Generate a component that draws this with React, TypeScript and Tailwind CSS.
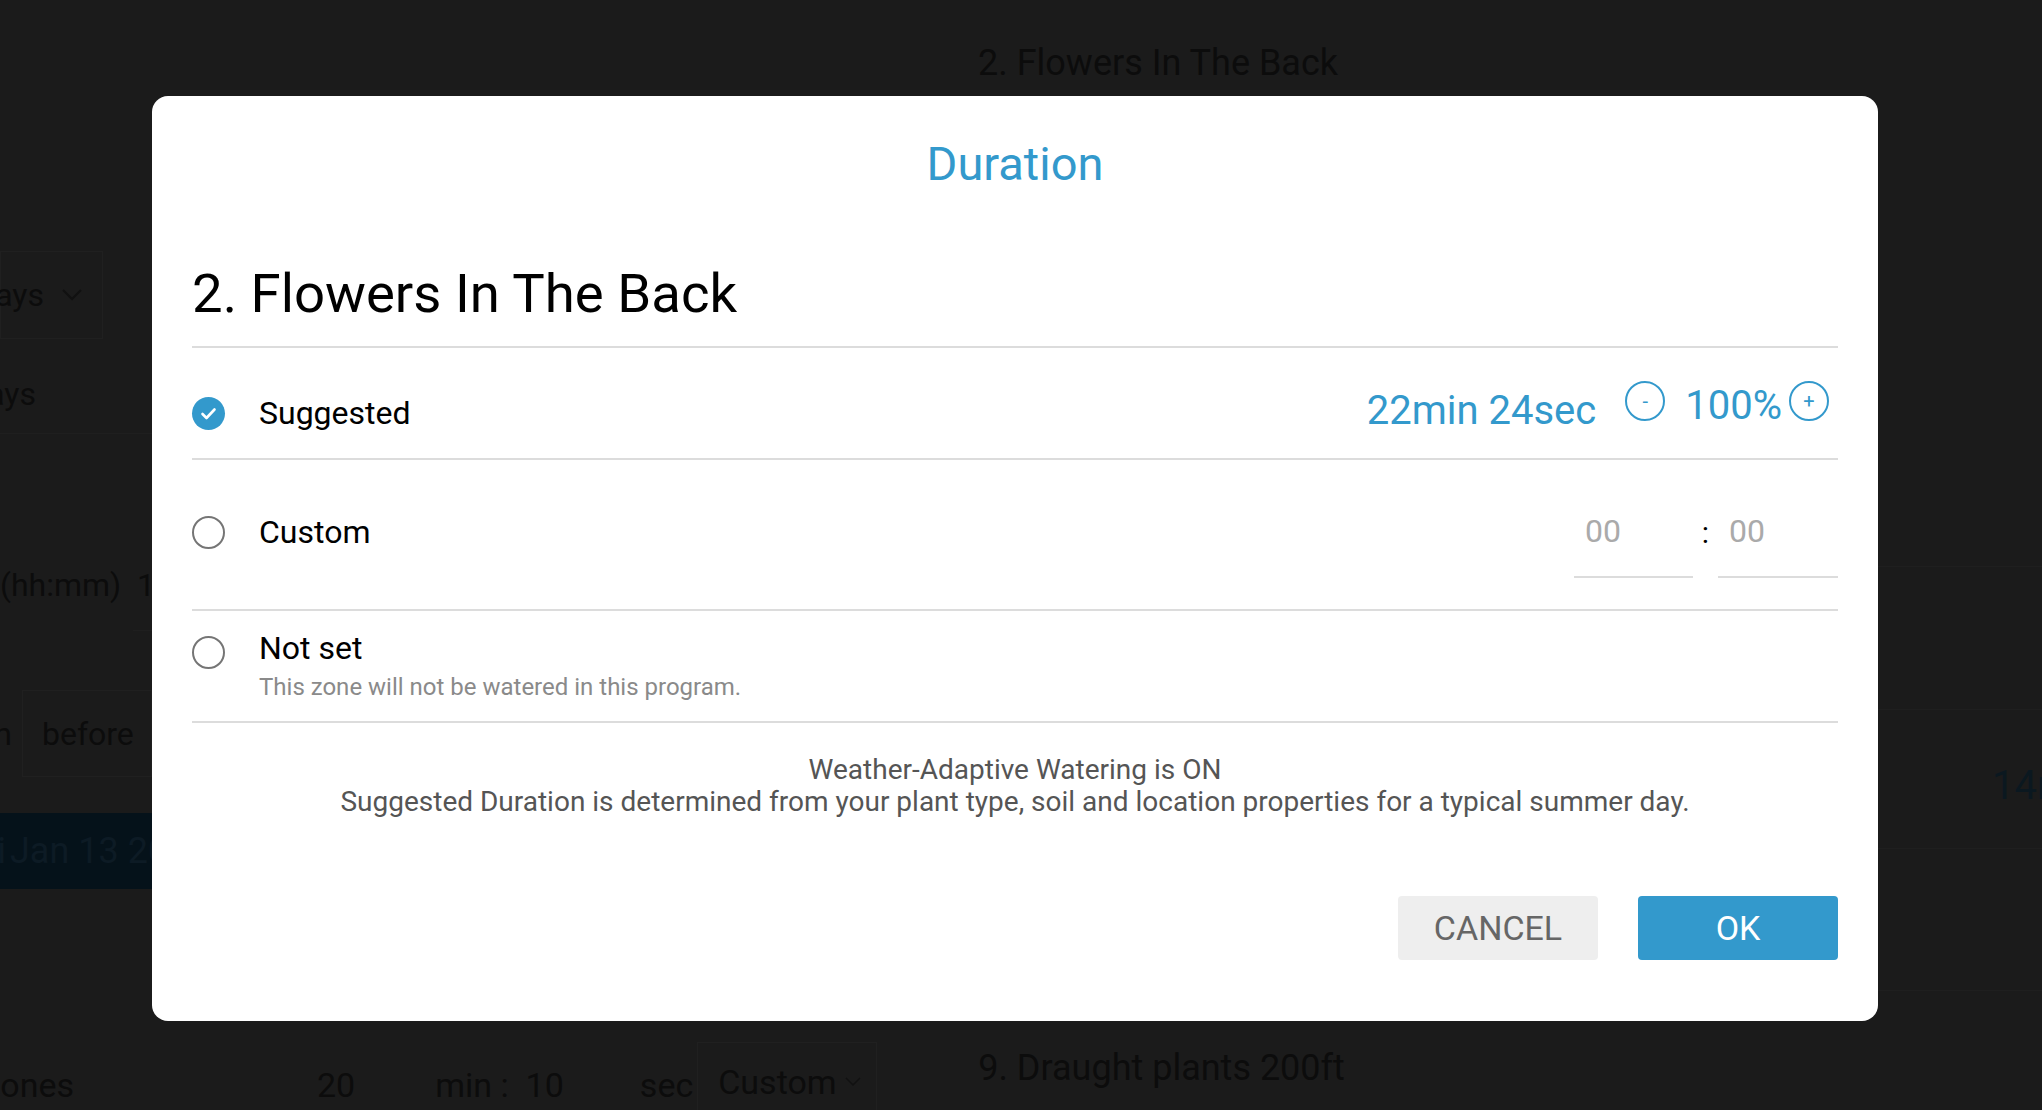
import React from "react";

const blue = "text-[#3399cc]";

function Radio({ checked }: { checked?: boolean }) {
  if (checked) {
    return (
      <div className="w-[33px] h-[33px] rounded-full bg-[#3399cc] flex items-center justify-center shrink-0">
        <svg width="33" height="33" viewBox="0 0 33 33">
          <polyline points="10.5,17 14.5,21 22.5,12.5" fill="none" stroke="#fff" strokeWidth="2.6" strokeLinecap="round" strokeLinejoin="round" />
        </svg>
      </div>
    );
  }
  return <div className="w-[33px] h-[33px] rounded-full border-2 border-[#757575] shrink-0" />;
}

function Background() {
  return (
    <div className="h-screen overflow-hidden bg-[#1b1b1b] text-[#0c0c0c] flex flex-col">
      {/* page header behind modal */}
      <div className="h-[96px] shrink-0 pl-[978px] pt-[41px] text-[36px] leading-[44px]">2. Flowers In The Back</div>

      <div className="h-[925px] shrink-0 flex justify-between">
        <div className="w-[152px] overflow-hidden flex flex-col text-[32px]">
          <div className="mt-[155px] h-[88px] w-[103px] border border-[#202020] flex items-center justify-end gap-[18px] pr-[20px]">
            <span className="whitespace-nowrap">Days</span>
            <svg width="20" height="12" viewBox="0 0 20 12" className="shrink-0">
              <polyline points="1,1 10,10 19,1" fill="none" stroke="#111" strokeWidth="2" />
            </svg>
          </div>
          <div className="h-[95px] pt-[16px] border-b border-[#1f1f1f] flex items-center">
            <div className="w-[36px] flex justify-end shrink-0">
              <span className="whitespace-nowrap">Days</span>
            </div>
          </div>
          <div className="h-[197px] flex flex-col">
            <div className="mt-[131px] whitespace-nowrap leading-[40px]">(hh:mm)&nbsp; 1</div>
            <div className="mt-auto ml-[133px] h-px bg-[#1f1f1f]" />
          </div>
          <div className="mt-[59px] h-[87px] flex items-center">
            <div className="w-[12px] flex justify-end shrink-0">
              <span className="whitespace-nowrap">min</span>
            </div>
            <div className="ml-[10px] h-full flex-1 border border-[#202020] flex items-center pl-[19px]">before</div>
          </div>
          <div className="mt-[36px] h-[76px] bg-[#05121a] text-[#0d1b25] text-[36px] flex items-center">
            <div className="w-[6px] flex justify-end shrink-0">
              <span className="whitespace-nowrap">Fri</span>
            </div>
            <span className="ml-[4px] whitespace-nowrap">Jan 13 2017</span>
          </div>
        </div>

        <div className="w-[164px] overflow-hidden flex flex-col">
          <div className="mt-[470px] h-px bg-[#1f1f1f]" />
          <div className="mt-[142px] h-px bg-[#1f1f1f]" />
          <div className="mt-[52px] pl-[114px] text-[40px] leading-[48px] text-[#0b1820] whitespace-nowrap">14min</div>
          <div className="mt-[38px] h-px bg-[#1f1f1f]" />
          <div className="mt-[141px] h-px bg-[#1f1f1f]" />
        </div>
      </div>

      <div className="flex-1 flex items-start text-[34px] whitespace-nowrap">
        <div className="w-[74px] mt-[39px] flex justify-end shrink-0">
          <span>zones</span>
        </div>
        <span className="ml-[243px] mt-[39px]">20</span>
        <span className="ml-[80px] mt-[39px]">min :&nbsp; 10</span>
        <span className="ml-[76px] mt-[39px]">sec</span>
        <div className="ml-[4px] mt-[21px] w-[180px] h-[80px] border border-[#202020] flex items-center pl-[20px] gap-[8px]">
          <span>Custom</span>
          <svg width="16" height="10" viewBox="0 0 16 10">
            <polyline points="1,1 8,8 15,1" fill="none" stroke="#111" strokeWidth="1.5" />
          </svg>
        </div>
        <span className="ml-[101px] mt-[20px] text-[36px]">9. Draught plants 200ft</span>
      </div>
    </div>
  );
}

export default function App() {
  return (
    <div className="relative font-['Roboto',sans-serif]">
      <Background />

      {/* Duration dialog */}
      <div className="fixed inset-0 pl-[152px] pt-[96px]">
        <div className="w-[1726px] h-[925px] bg-white rounded-[16px] px-[40px] flex flex-col">
          <h2 className={`pt-[40px] text-center text-[47px] leading-[56px] ${blue}`}>Duration</h2>

          <div className="mt-[69px] pb-[21px] border-b-2 border-[#dcdcdc]">
            <h1 className="text-[54.5px] leading-[64px] text-black">2. Flowers In The Back</h1>
          </div>

          {/* Suggested */}
          <div className="h-[112px] pt-[20px] border-b-2 border-[#dcdcdc] flex items-center">
            <Radio checked />
            <span className="ml-[34px] text-[32px] leading-[40px] text-black">Suggested</span>
            <div className={`ml-auto flex items-center ${blue}`}>
              <span className="mb-[4px] text-[40px] leading-[48px]">22min 24sec</span>
              <button className="ml-[29px] mb-[24px] w-[40px] h-[40px] rounded-full border-2 border-[#3399cc] flex items-center justify-center text-[20px] leading-none">
                -
              </button>
              <span className="ml-[20px] mb-[14px] text-[40px] leading-[48px]">100%</span>
              <button className="ml-[7px] mr-[9px] mb-[24px] w-[40px] h-[40px] rounded-full border-2 border-[#3399cc] flex items-center justify-center text-[20px] leading-none">
                +
              </button>
            </div>
          </div>

          {/* Custom */}
          <div className="h-[151px] pt-[32px] border-b-2 border-[#dcdcdc] flex items-start">
            <div className="h-[80px] flex items-center">
              <Radio />
              <span className="ml-[34px] text-[32px] leading-[40px] text-black">Custom</span>
            </div>
            <div className="ml-auto flex items-start">
              <div className="w-[119px] h-[86px] pb-[6px] border-b-2 border-[#dcdcdc] flex items-center pl-[11px] text-[32px] text-[#aaaaaa]">00</div>
              <div className="w-[25px] h-[80px] flex items-center justify-center text-[30px] text-black">:</div>
              <div className="w-[120px] h-[86px] pb-[6px] border-b-2 border-[#dcdcdc] flex items-center pl-[11px] text-[32px] text-[#aaaaaa]">00</div>
            </div>
          </div>

          {/* Not set */}
          <div className="h-[112px] pt-[17px] border-b-2 border-[#dcdcdc] flex items-start">
            <div className="mt-[8px]">
              <Radio />
            </div>
            <div className="ml-[34px] flex flex-col">
              <span className="text-[32px] leading-[40px] text-black">Not set</span>
              <span className="mt-[4px] text-[24px] leading-[30px] text-[#8a8a8a]">This zone will not be watered in this program.</span>
            </div>
          </div>

          <div className="mt-[31px] text-center text-[28px] leading-[32px] text-[#555555]">
            <p>Weather-Adaptive Watering is ON</p>
            <p>Suggested Duration is determined from your plant type, soil and location properties for a typical summer day.</p>
          </div>

          <div className="mt-[78px] flex justify-end gap-[40px]">
            <button className="w-[200px] h-[64px] rounded-[4px] bg-[#eeeeee] text-[#666666] text-[34px]">CANCEL</button>
            <button className="w-[200px] h-[64px] rounded-[4px] bg-[#3399cc] text-white text-[34px]">OK</button>
          </div>
        </div>
      </div>
    </div>
  );
}
